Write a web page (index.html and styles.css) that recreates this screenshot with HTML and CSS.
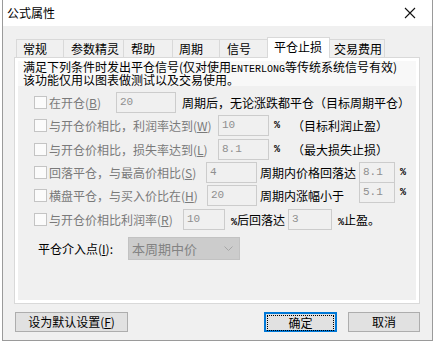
FILE: index.html
```html
<html>
<head>
    <title>公式属性</title>
    <link rel="stylesheet" href="styles.css">
</head>
<body>
  <div class="dialog">
    <div class="titlebar">
      <span class="title">公式属性</span>
      <svg class="close" width="12" height="12" viewBox="0 0 12 12">
        <path d="M1 1 L11 11 M11 1 L1 11" stroke="#111" stroke-width="1.1" fill="none"/>
      </svg>
    </div>

    <div class="tabs">
      <div class="tab t1">常规</div>
      <div class="tab t2">参数精灵</div>
      <div class="tab t3">帮助</div>
      <div class="tab t4">周期</div>
      <div class="tab t5">信号</div>
      <div class="tab active">平仓止损</div>
      <div class="tab t7">交易费用</div>
    </div>

    <div class="panel">
      <div class="page">
        <div class="note">
          <div class="note-line">满足下列条件时发出平仓信号(仅对使用<span class="mono">ENTERLONG</span>等传统系统信号有效)</div>
          <div class="note-line">该功能仅用以图表做测试以及交易使用。</div>
        </div>

        <div class="row r1">
          <span class="check"></span>
          <span class="lbl" style="width:67px">在开仓(<u>B</u>)</span>
          <span class="field" style="width:60px">20</span>
          <span class="txt gap6">周期后，无论涨跌都平仓（目标周期平仓）</span>
        </div>

        <div class="row r2">
          <span class="check"></span>
          <span class="lbl" style="width:169px">与开仓价相比，利润率达到(<u>W</u>)</span>
          <span class="field" style="width:51px">10</span>
          <span class="pct">%</span>
          <span class="txt">（目标利润止盈）</span>
        </div>

        <div class="row r3">
          <span class="check"></span>
          <span class="lbl" style="width:169px">与开仓价相比，损失率达到(<u>L</u>)</span>
          <span class="field" style="width:51px">8.1</span>
          <span class="pct">%</span>
          <span class="txt">（最大损失止损）</span>
        </div>

        <div class="row r4">
          <span class="check"></span>
          <span class="lbl" style="width:157px">回落平仓，与最高价相比(<u>S</u>)</span>
          <span class="field" style="width:51px">4</span>
          <span class="txt mid">周期内价格回落达</span>
          <span class="field" style="width:36px">8.1</span>
          <span class="pct2">%</span>
        </div>

        <div class="row r5">
          <span class="check"></span>
          <span class="lbl" style="width:158px">横盘平仓，与买入价比在(<u>H</u>)</span>
          <span class="field" style="width:50px">20</span>
          <span class="txt mid">周期内涨幅小于</span>
          <span class="field up" style="width:36px">5.1</span>
          <span class="pct2 up">%</span>
        </div>

        <div class="row r6">
          <span class="check"></span>
          <span class="lbl" style="width:134px">与开仓价相比利润率(<u>R</u>)</span>
          <span class="field" style="width:42px">10</span>
          <span class="txt after" style="width:57px"><span class="pin">%</span>后回落达</span>
          <span class="field" style="width:44px">3</span>
          <span class="txt gap6"><span class="pin">%</span>止盈。</span>
        </div>

        <div class="row r7">
          <span class="txt entry">平仓介入点(<u>I</u>):</span>
          <div class="select">
            <span>本周期中价</span>
            <svg width="9" height="6" viewBox="0 0 9 6">
              <path d="M0.5 0.5 L4.5 4.5 L8.5 0.5" stroke="#a6a6a6" fill="none"/>
            </svg>
          </div>
        </div>
      </div>
    </div>

    <div class="buttons">
      <div class="btn wide">设为默认设置(<u>F</u>)</div>
      <div class="spacer"></div>
      <div class="btn default"><span>确定</span></div>
      <div class="btn">取消</div>
    </div>
  </div>
</body>
</html>
```

FILE: styles.css
```css
    body {
        margin: 0;
        background: #ffffff;
        font-family: "Noto Sans CJK SC", sans-serif;
        font-size: 12px;
        color: #000;
    }

    .dialog {
        box-sizing: border-box;
        margin-left: 2px;
        width: 431px;
        height: 341px;
        background: #f0f0f0;
        border: 1px solid #9a9a9a;
        border-top: none;
    }

    .titlebar {
        height: 26px;
        background: #fff;
        display: flex;
        align-items: center;
        padding-left: 4px;
    }

    .title {
        flex: 1;
        line-height: 26px;
    }

    .close {
        margin-right: 16px;
    }

    /* tabs */
    .tabs {
        display: flex;
        align-items: flex-end;
        margin-top: 11px;
        margin-left: 13px;
        height: 20px;
        position: relative;
        z-index: 2;
    }

    .tab {
        box-sizing: border-box;
        height: 18px;
        line-height: 18px;
        border: 1px solid #d9d9d9;
        border-bottom: none;
        margin-right: -1px;
        padding-left: 6px;
        background: #f0f0f0;
    }

    .t1 { width: 48px; }
    .t2 { width: 61px; padding-left: 7px; }
    .t3 { width: 50px; padding-left: 7px; }
    .t4 { width: 48px; }
    .t5 { width: 49px; padding-left: 7px; }
    .t7 { width: 56px; padding-left: 4px; }

    .tab.active {
        width: 63px;
        height: 21px;
        line-height: 18px;
        background: #ffffff;
        margin-bottom: -1px;
        margin-right: -1px;
    }

    .panel {
        box-sizing: border-box;
        margin-left: 11px;
        width: 406px;
        height: 247px;
        border: 1px solid #d9d9d9;
        background: #ffffff;
        padding: 3px;
    }

    .page {
        height: 239px;
        background: #f0f0f0;
    }

    .note {
        background: #f8f8f8;
        height: 25px;
        padding-left: 5px;
    }

    .note-line {
        height: 12px;
        line-height: 12px;
        margin-bottom: 1px;
        white-space: nowrap;
    }

    .mono {
        font-family: "Liberation Mono", monospace;
        font-size: 10px;
    }

    /* option rows */
    .row {
        display: flex;
        align-items: flex-start;
        padding-left: 16px;
        height: 23px;
    }

    .row > * {
        flex-shrink: 0;
    }

    .r1 { margin-top: 6px; }
    .r2 { height: 24px; }
    .r5 { height: 24px; }
    .r6 { height: 28px; }
    .r7 { padding-left: 20px; }

    .check {
        box-sizing: border-box;
        width: 13px;
        height: 13px;
        margin-top: 4px;
        margin-right: 2px;
        border: 1px solid #c4c4c4;
        background: #fbfbfb;
    }

    .lbl {
        color: #7a7a7a;
        line-height: 21px;
        white-space: nowrap;
        overflow: hidden;
    }

    .txt {
        line-height: 21px;
        white-space: nowrap;
    }

    .gap6 { margin-left: 6px; }

    .mid {
        margin-left: 3px;
        width: 99px;
    }

    .after {
        margin-left: 6px;
    }

    .pin {
        font-family: "Liberation Mono", monospace;
        font-weight: bold;
        font-size: 10px;
    }

    .entry {
        width: 90px;
        line-height: 23px;
    }

    .field {
        box-sizing: border-box;
        height: 21px;
        border: 1px solid #cccccc;
        background: #f0f0f0;
        color: #8f8f8f;
        font-family: "Liberation Mono", monospace;
        font-size: 11px;
        line-height: 18px;
        padding-left: 3px;
    }

    .up {
        margin-top: -3px;
    }

    .pct {
        width: 18px;
        margin-left: 5px;
        line-height: 21px;
        font-family: "Liberation Mono", monospace;
        font-weight: bold;
        font-size: 10px;
    }

    .pct2 {
        margin-left: 5px;
        line-height: 21px;
        font-family: "Liberation Mono", monospace;
        font-weight: bold;
        font-size: 10px;
    }

    .select {
        box-sizing: border-box;
        width: 112px;
        height: 23px;
        background: #cccccc;
        border: 1px solid #c2c2c2;
        display: flex;
        align-items: center;
        justify-content: space-between;
        padding: 0 6px 0 3px;
        color: #838383;
        font-size: 13px;
    }

    /* bottom buttons */
    .buttons {
        display: flex;
        margin: 8px 12px 0 12px;
    }

    .spacer {
        flex: 1;
    }

    .btn {
        box-sizing: border-box;
        width: 72px;
        height: 20px;
        line-height: 18px;
        text-align: center;
        background: #e1e1e1;
        border: 1px solid #adadad;
    }

    .btn.wide {
        width: 113px;
    }

    .btn.default {
        width: 73px;
        margin-right: 11px;
        border: 2px solid #0078d7;
        line-height: 16px;
        padding: 1px;
    }

    .btn.default span {
        display: block;
        height: 14px;
        line-height: 14px;
        border: 1px dotted #000;
    }
```
